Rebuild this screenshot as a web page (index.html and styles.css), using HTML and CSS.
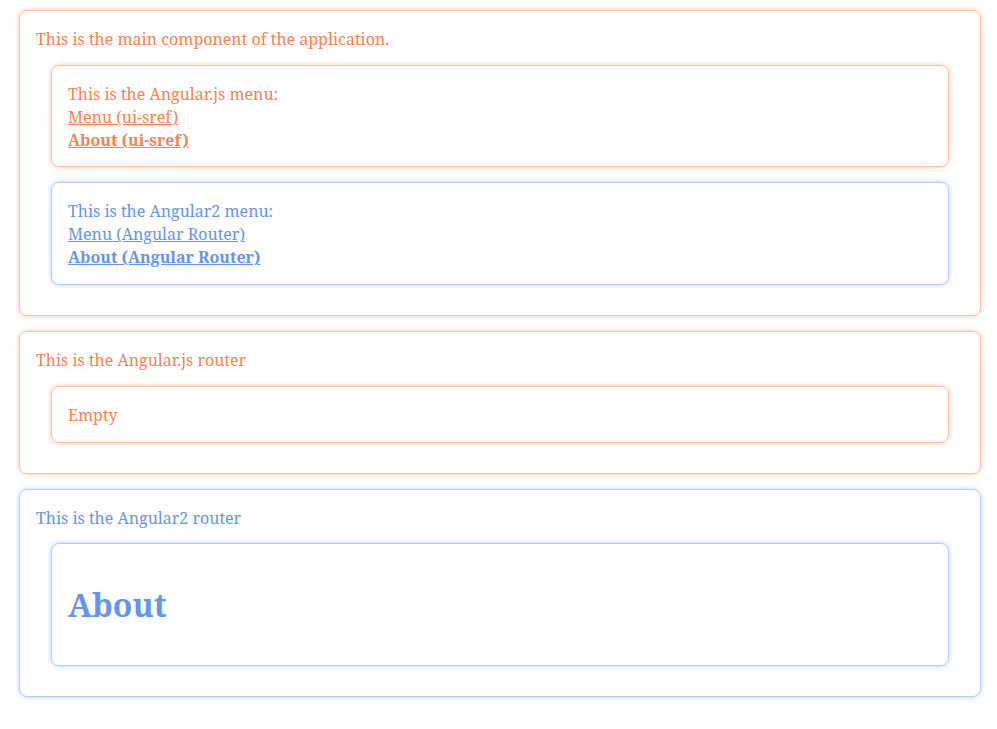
FILE: index.html
```html
<!DOCTYPE html>
<html>
<head>
<meta charset="utf-8">
<link rel="stylesheet" href="styles.css">
</head>
<body>
<div class="page">
  <div class="box ng1">
    <p class="caption">This is the main component of the application.</p>
    <div class="box ng1 inner">
      <div class="line">This is the Angular.js menu:</div>
      <div class="line"><a href="#">Menu (ui-sref)</a></div>
      <div class="line"><a href="#" class="active">About (ui-sref)</a></div>
    </div>
    <div class="box ng2 inner">
      <div class="line">This is the Angular2 menu:</div>
      <div class="line"><a href="#">Menu (Angular Router)</a></div>
      <div class="line"><a href="#" class="active">About (Angular Router)</a></div>
    </div>
  </div>
  <div class="box ng1">
    <p class="caption">This is the Angular.js router</p>
    <div class="box ng1 inner">
      <div class="line">Empty</div>
    </div>
  </div>
  <div class="box ng2">
    <p class="caption">This is the Angular2 router</p>
    <div class="box ng2 inner">
      <h1 class="title">About</h1>
    </div>
  </div>
</div>
</body>
</html>
```

FILE: styles.css
```css
html, body {
  margin: 0;
  padding: 0;
  background: #ffffff;
}
.page {
  padding: 10px 16px 10px 19px;
  display: flex;
  flex-direction: column;
  gap: 15px;
  font-family: "Noto Serif", "DejaVu Serif", serif;
  font-size: 16px;
  line-height: 1.42857143;
}
.box {
  border: 1px solid;
  border-radius: 8px;
  padding: 17px 16px 15px;
}
.caption {
  margin: 0 0 14px;
}
.line {
  margin: 0;
}
.inner {
  margin: 0 15px 15px;
}
.ng1 {
  color: #ff7f50;
  border-color: #ffbfa7;
  box-shadow: 0 0 5px #ffc6b1;
}
.ng2 {
  color: #6495ed;
  border-color: #b5caf6;
  box-shadow: 0 0 5px #bcd0f7;
}
a {
  color: inherit;
  text-decoration: underline;
}
a.active {
  font-weight: bold;
}
.title {
  font-size: 32px;
  font-weight: bold;
  line-height: 45px;
  margin: 21px 0 23px;
}
```
